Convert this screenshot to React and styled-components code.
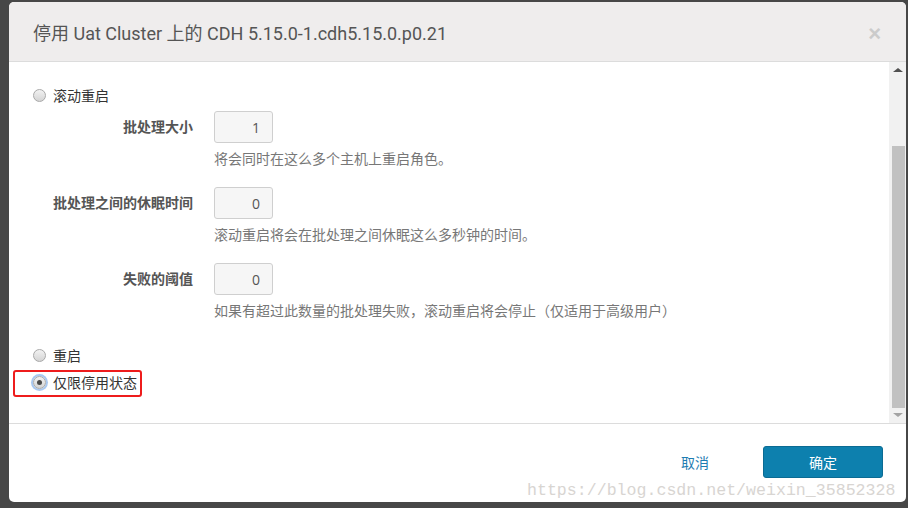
import React from 'react';
import styled, { createGlobalStyle } from 'styled-components';

const GlobalStyle = createGlobalStyle`
  html, body {
    margin: 0;
    padding: 0;
    background: #474747;
  }
  body {
    font-family: "Noto Sans CJK SC", "Noto Sans", sans-serif;
  }
`;

const Backdrop = styled.div`
  width: 908px;
  height: 508px;
  box-sizing: border-box;
  padding: 2px 2px 6px 9px;
  background: #474747;
`;

const Dialog = styled.div`
  position: relative;
  width: 897px;
  height: 500px;
  display: flex;
  flex-direction: column;
  background: #fff;
  border-radius: 5px;
  overflow: hidden;
`;

const Header = styled.div`
  height: 59px;
  flex: none;
  display: flex;
  align-items: center;
  justify-content: space-between;
  padding: 0 25px 0 24px;
  background: #efeded;
  border-bottom: 1px solid #dcdcdc;
`;

const Title = styled.h4`
  margin: 0;
  font-family: Roboto, "Noto Sans CJK SC", sans-serif;
  font-weight: 400;
  font-size: 18px;
  color: #555;
`;

const Close = styled.span`
  margin-top: 4px;
  font-family: "Liberation Sans", sans-serif;
  font-weight: 700;
  font-size: 22px;
  line-height: 1;
  color: #cbcbcb;
`;

const BodyWrap = styled.div`
  flex: 1;
  display: flex;
  min-height: 0;
`;

const Body = styled.div`
  flex: 1;
  padding: 23px 24px 0;
`;

const Scrollbar = styled.div`
  width: 17px;
  flex: none;
  display: flex;
  flex-direction: column;
  align-items: center;
  background: #f1f1f1;
`;

const Arrow = styled.div`
  width: 0;
  height: 0;
  margin: ${p => (p.$down ? '5px 0 6px' : '6px 0 5px')};
  border-left: 5px solid transparent;
  border-right: 5px solid transparent;
  ${p => (p.$down
    ? 'border-top: 4px solid #a3a3a3;'
    : 'border-bottom: 4px solid #505050;')}
`;

const Thumb = styled.div`
  width: 13px;
  margin-left: 2px;
  flex: 1;
  margin-top: 69px;
  background: #c1c1c1;
`;

const RadioRow = styled.label`
  position: relative;
  display: flex;
  align-items: center;
  gap: 7px;
  height: 20px;
  margin-top: ${p => p.$gap || 0}px;
  font-size: 14px;
  color: #333;
`;

const RadioMark = styled.span`
  box-sizing: border-box;
  width: 13px;
  height: 13px;
  border-radius: 50%;
  border: 1px solid #a9a9a9;
  background: linear-gradient(#f2f2f2, #d4d4d4);
  display: flex;
  align-items: center;
  justify-content: center;
  ${p => p.$checked && `
    box-shadow: 0 0 0 2px #a9c8f0;
    &::after {
      content: '';
      width: 5px;
      height: 5px;
      border-radius: 50%;
      background: #4a4a4a;
    }
  `}
`;

const Annotation = styled.span`
  position: absolute;
  left: -20px;
  top: -2px;
  width: 129px;
  height: 27px;
  box-sizing: border-box;
  border: 2px solid #ee1c1c;
  border-radius: 3px;
  pointer-events: none;
`;

const Group = styled.div`
  display: grid;
  grid-template-columns: 140px 1fr;
  column-gap: 21px;
  row-gap: 6px;
  margin: ${p => p.$top}px 0 0 20px;
`;

const FieldLabel = styled.div`
  align-self: center;
  margin-top: -3px;
  text-align: right;
  font-size: 14px;
  font-weight: 700;
  color: #555;
`;

const NumberBox = styled.div`
  box-sizing: border-box;
  width: 59px;
  height: 32px;
  padding-right: 12px;
  display: flex;
  align-items: center;
  justify-content: flex-end;
  background: #f6f6f6;
  border: 1px solid #cfcfcf;
  border-radius: 3px;
  font-family: "Open Sans", "Noto Sans", sans-serif;
  font-size: 14px;
  color: #555;
`;

const Help = styled.div`
  grid-column: 2;
  line-height: 18px;
  font-size: 14px;
  color: #777;
`;

const Footer = styled.div`
  position: relative;
  height: 79px;
  box-sizing: border-box;
  flex: none;
  border-top: 1px solid #dcdcdc;
  display: flex;
  align-items: center;
  justify-content: flex-end;
  gap: 42px;
  padding: 0 23px 3px 0;
`;

const LinkButton = styled.button`
  border: none;
  background: none;
  padding: 0 12px;
  font-family: "Noto Sans CJK SC", sans-serif;
  font-size: 14px;
  color: #1f7db2;
  cursor: pointer;
`;

const PrimaryButton = styled.button`
  width: 120px;
  height: 32px;
  border: 1px solid #0b6b93;
  border-radius: 3px;
  background: #0d80ae;
  font-family: "Noto Sans CJK SC", sans-serif;
  font-size: 14px;
  color: #fff;
  cursor: pointer;
`;

const Watermark = styled.span`
  position: absolute;
  left: 518px;
  bottom: 1px;
  font-family: "Liberation Mono", monospace;
  font-size: 16.6px;
  line-height: 20px;
  color: #d8d5d2;
  white-space: nowrap;
  pointer-events: none;
`;

const fields = [
  { label: '批处理大小', value: '1', help: '将会同时在这么多个主机上重启角色。', top: 6 },
  { label: '批处理之间的休眠时间', value: '0', help: '滚动重启将会在批处理之间休眠这么多秒钟的时间。', top: 20 },
  { label: '失败的阈值', value: '0', help: '如果有超过此数量的批处理失败，滚动重启将会停止（仅适用于高级用户）', top: 20 },
];

export default function App() {
  return (
    <Backdrop>
      <GlobalStyle />
      <Dialog>
        <Header>
          <Title>停用 Uat Cluster 上的 CDH 5.15.0-1.cdh5.15.0.p0.21</Title>
          <Close>×</Close>
        </Header>
        <BodyWrap>
          <Body>
            <RadioRow>
              <RadioMark />
              滚动重启
            </RadioRow>
            {fields.map(f => (
              <Group key={f.label} $top={f.top}>
                <FieldLabel>{f.label}</FieldLabel>
                <NumberBox>{f.value}</NumberBox>
                <Help>{f.help}</Help>
              </Group>
            ))}
            <RadioRow $gap={26}>
              <RadioMark />
              重启
            </RadioRow>
            <RadioRow $gap={7}>
              <Annotation />
              <RadioMark $checked />
              仅限停用状态
            </RadioRow>
          </Body>
          <Scrollbar>
            <Arrow />
            <Thumb />
            <Arrow $down />
          </Scrollbar>
        </BodyWrap>
        <Footer>
          <LinkButton>取消</LinkButton>
          <PrimaryButton>确定</PrimaryButton>
          <Watermark>https://blog.csdn.net/weixin_35852328</Watermark>
        </Footer>
      </Dialog>
    </Backdrop>
  );
}
